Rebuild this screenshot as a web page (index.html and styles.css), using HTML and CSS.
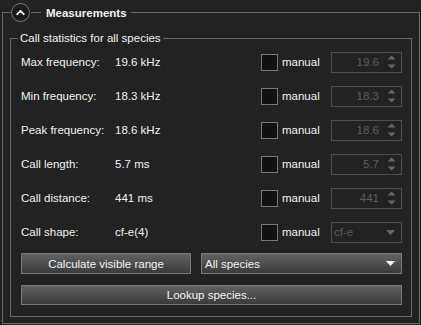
FILE: index.html
```html
<!DOCTYPE html>
<html>
<head>
<meta charset="utf-8">
<link rel="stylesheet" href="styles.css">
</head>
<body>
<div class="panel">
  <fieldset class="outer">
    <legend class="outer-legend">
      <span class="toggle">
        <svg width="19" height="19" viewBox="0 0 19 19"><circle cx="9.5" cy="9.5" r="9" fill="#1c1c1c" stroke="#777" stroke-width="1"/><path d="M6.2 11.2 L9.5 7.9 L12.8 11.2" fill="none" stroke="#fff" stroke-width="1.8" stroke-linecap="round" stroke-linejoin="round"/></svg>
      </span>
      <span class="dash"></span>
      <span class="title">Measurements</span>
    </legend>
    <fieldset class="inner">
      <legend class="inner-legend">Call statistics for all species</legend>
      <div class="grid">
        <div class="label">Max frequency:</div><div class="value">19.6 kHz</div>
        <div class="check"></div><div class="manual">manual</div>
        <div class="spin"><span class="num">19.6</span><svg class="arrows" width="9" height="14" viewBox="0 0 9 14"><path d="M0.5 4.5 L4.5 0.5 L8.5 4.5Z M0.5 9.5 L4.5 13.5 L8.5 9.5Z" fill="#666"/></svg></div>

        <div class="label">Min frequency:</div><div class="value">18.3 kHz</div>
        <div class="check"></div><div class="manual">manual</div>
        <div class="spin"><span class="num">18.3</span><svg class="arrows" width="9" height="14" viewBox="0 0 9 14"><path d="M0.5 4.5 L4.5 0.5 L8.5 4.5Z M0.5 9.5 L4.5 13.5 L8.5 9.5Z" fill="#666"/></svg></div>

        <div class="label">Peak frequency:</div><div class="value">18.6 kHz</div>
        <div class="check"></div><div class="manual">manual</div>
        <div class="spin"><span class="num">18.6</span><svg class="arrows" width="9" height="14" viewBox="0 0 9 14"><path d="M0.5 4.5 L4.5 0.5 L8.5 4.5Z M0.5 9.5 L4.5 13.5 L8.5 9.5Z" fill="#666"/></svg></div>

        <div class="label">Call length:</div><div class="value">5.7 ms</div>
        <div class="check"></div><div class="manual">manual</div>
        <div class="spin"><span class="num">5.7</span><svg class="arrows" width="9" height="14" viewBox="0 0 9 14"><path d="M0.5 4.5 L4.5 0.5 L8.5 4.5Z M0.5 9.5 L4.5 13.5 L8.5 9.5Z" fill="#666"/></svg></div>

        <div class="label">Call distance:</div><div class="value">441 ms</div>
        <div class="check"></div><div class="manual">manual</div>
        <div class="spin"><span class="num">441</span><svg class="arrows" width="9" height="14" viewBox="0 0 9 14"><path d="M0.5 4.5 L4.5 0.5 L8.5 4.5Z M0.5 9.5 L4.5 13.5 L8.5 9.5Z" fill="#666"/></svg></div>

        <div class="label">Call shape:</div><div class="value">cf-e(4)</div>
        <div class="check"></div><div class="manual">manual</div>
        <div class="combo-small"><span class="cs-text">cf-e</span><svg width="9" height="5" viewBox="0 0 9 5"><path d="M0 0 L9 0 L4.5 5Z" fill="#666"/></svg></div>
      </div>
      <div class="actions">
        <div class="btn calc">Calculate visible range</div>
        <div class="combo"><span>All species</span><svg width="9" height="5" viewBox="0 0 9 5"><path d="M0 0 L9 0 L4.5 5Z" fill="#fff"/></svg></div>
      </div>
      <div class="btn lookup">Lookup species...</div>
    </fieldset>
  </fieldset>
</div>
</body>
</html>
```
FILE: styles.css
```css
html, body {
  margin: 0;
  padding: 0;
  background: #222222;
  font-family: "Liberation Sans", Arial, sans-serif;
  font-size: 11.5px;
  color: #f2f2f2;
}
.panel {
  padding: 0 1px 0 2px;
  width: 421px;
  box-sizing: border-box;
}
fieldset {
  margin: 0;
  min-width: 0;
}
.outer {
  border: 1px solid #6a6a6a;
  padding: 0 7px 6px 7px;
}
.outer-legend {
  display: flex;
  align-items: center;
  height: 25px;
  padding: 0 4px 0 0;
  margin-left: 1px;
}
.toggle {
  display: flex;
  width: 19px;
  height: 19px;
}
.dash {
  width: 10px;
  height: 1px;
  background: #6a6a6a;
  margin-left: 1px;
  margin-right: 5px;
}
.title {
  font-weight: bold;
  font-size: 11.5px;
  line-height: 16px;
}
.inner {
  border: 1px solid #6a6a6a;
  padding: 0 9px 11px 10px;
  margin-top: 7px;
}
.inner-legend {
  padding: 0 2px;
  margin-left: -3px;
  line-height: 13px;
  height: 13px;
  font-size: 11.5px;
}
.grid {
  display: grid;
  grid-template-columns: 94px 146px 17px 53px 71px;
  grid-auto-rows: 34px;
  align-items: center;
}
.label, .value {
  white-space: nowrap;
}
.check {
  width: 17px;
  height: 17px;
  box-sizing: border-box;
  border: 1px solid #777;
  background: #111;
}
.manual {
  padding-left: 4px;
}
.spin {
  height: 21px;
  box-sizing: border-box;
  border: 1px solid #4e4e4e;
  display: flex;
  align-items: center;
  justify-content: flex-end;
  padding-right: 5px;
  color: #5e5e5e;
}
.num {
  margin-right: 8px;
}
.arrows {
  display: block;
}
.combo-small {
  height: 21px;
  box-sizing: border-box;
  border: 1px solid #4e4e4e;
  display: flex;
  align-items: center;
  justify-content: space-between;
  padding: 0 6px 0 2px;
  color: #5a5a5a;
}
.actions {
  display: flex;
  gap: 10px;
  margin-top: 4px;
}
.btn {
  box-sizing: border-box;
  border: 1px solid #7a7a7a;
  background: linear-gradient(#626262, #3a3a3a);
  display: flex;
  align-items: center;
  justify-content: center;
  color: #f4f4f4;
}
.calc {
  width: 170px;
  height: 21px;
}
.combo {
  width: 201px;
  height: 21px;
  box-sizing: border-box;
  border: 1px solid #7a7a7a;
  background: linear-gradient(#626262, #3a3a3a);
  display: flex;
  align-items: center;
  justify-content: space-between;
  padding: 0 6px 0 3px;
}
.lookup {
  height: 20px;
  margin-top: 11px;
}
```
